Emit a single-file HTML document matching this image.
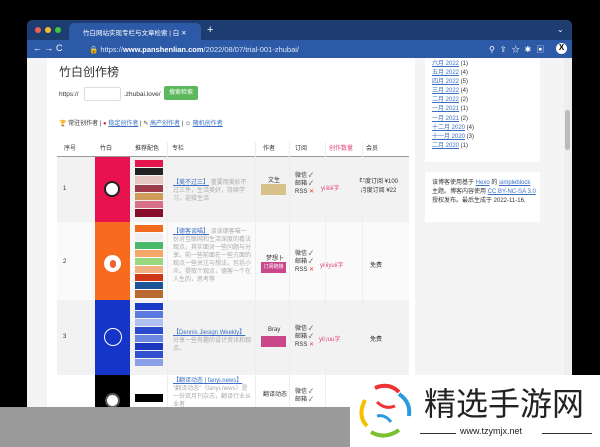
<!DOCTYPE html>
<html><head><meta charset="utf-8"><style>
*{margin:0;padding:0;box-sizing:border-box}
body{width:600px;height:447px;background:#000;position:relative;overflow:hidden;font-family:"Liberation Sans","Noto Sans CJK SC",sans-serif;font-size:6px;color:#333}
.a{position:absolute;white-space:nowrap}
.w{white-space:normal}
.lnk{color:#3a6fc4;text-decoration:underline}
</style></head><body>
<div class="a" style="left:27px;top:20px;width:545px;height:390px;background:#f4f4f4;border-radius:6px 6px 0 0;overflow:hidden">
 <div class="a" style="left:0;top:0;width:545px;height:20px;background:#1d3d70"></div>
 <div class="a" style="left:8px;top:7px;width:6px;height:6px;border-radius:3px;background:#ee5f57"></div>
 <div class="a" style="left:18px;top:7px;width:6px;height:6px;border-radius:3px;background:#f5bd2f"></div>
 <div class="a" style="left:28px;top:7px;width:6px;height:6px;border-radius:3px;background:#3fc73f"></div>
 <div class="a" style="left:42px;top:3px;width:132px;height:17px;background:#2c5aa6;border-radius:5px 5px 0 0"></div>
 <div class="a" style="left:56px;top:7px;color:#fff;font-size:6.5px">竹白网站实现专栏与文章检索 | 白 ✕</div>
 <div class="a" style="left:180px;top:4px;color:#fff;font-size:11px">+</div>
 <div class="a" style="left:530px;top:5px;color:#fff;font-size:8px">⌄</div>
 <div class="a" style="left:0;top:20px;width:545px;height:18px;background:#2c5aa6"></div>
 <div class="a" style="left:6px;top:23px;color:#fff;font-size:9px">← → C</div>
 <div class="a" style="left:62px;top:25px;color:#dde6f5;font-size:7.5px">🔒 https://<b style="color:#fff">www.panshenlian.com</b>/2022/08/07/trial-001-zhubai/</div>
 <div class="a" style="left:462px;top:24px;color:#fff;font-size:8px;letter-spacing:5px">⚲⇪☆✱▣</div>
 <div class="a" style="left:529px;top:23px;width:11px;height:11px;border-radius:6px;background:#fff;color:#000;font-size:8px;text-align:center;font-weight:bold">X</div>
 <!-- main card -->
 <div class="a" style="left:20px;top:38px;width:368px;height:360px;background:#fff"></div>
 <div class="a" style="left:32px;top:43px;font-size:12px;color:#333">竹白创作榜</div>
 <div class="a" style="left:32px;top:71px;font-size:6.5px">https://</div>
 <div class="a" style="left:57px;top:67px;width:37px;height:14px;border:1px solid #ddd;border-radius:2px"></div>
 <div class="a" style="left:97px;top:71px;font-size:6.5px">.zhubai.love/</div>
 <div class="a" style="left:137px;top:66px;width:34px;height:14px;background:#5cb85c;border-radius:2px;color:#fff;font-size:6px;text-align:center;line-height:14px">搜索检索</div>
 <div class="a" style="left:32px;top:98px;font-size:6px">🏆 常驻创作者 | <span style="color:#c33">●</span> <span class="lnk">稳定创作者</span> | ✎ <span class="lnk">高产创作者</span> | ☺ <span class="lnk">随机创作者</span></div>
 <!-- table header -->
 <div class="a" style="left:30px;top:122px;width:352px;height:15px;border-bottom:1px solid #999;font-size:6px;line-height:15px">
  <span class="a" style="left:7px">序号</span><span class="a" style="left:43px">竹白</span><span class="a" style="left:78px">推荐配色</span><span class="a" style="left:115px">专栏</span><span class="a" style="left:206px">作者</span><span class="a" style="left:238px">订阅</span><span class="a" style="left:272px;color:#e0457b">创作数量</span><span class="a" style="left:309px">会员</span>
 </div>
 <!-- row1 -->
 <div class="a" style="left:30px;top:137px;width:352px;height:65px;background:#f2f2f2"></div>
 <div class="a" style="left:68px;top:137px;width:35px;height:65px;background:#e8124f"></div>
 <div class="a" style="left:77px;top:161px;width:16px;height:16px;border-radius:8px;background:#fff;border:2px solid #222"></div>
 <div class="a" style="left:108px;top:140px;width:28px">
  <div style="height:7px;background:#e5154d;margin-bottom:1px"></div><div style="height:7px;background:#222;margin-bottom:1px"></div><div style="height:8px;background:#e7c7c3;margin-bottom:1px"></div><div style="height:7px;background:#9a3a4a;margin-bottom:1px"></div><div style="height:7px;background:#d09a5a;margin-bottom:1px"></div><div style="height:7px;background:#d8708a;margin-bottom:1px"></div><div style="height:8px;background:#8a0c2c"></div></div>
 <div class="a" style="left:36px;top:166px">1</div>
 <div class="a w" style="left:146px;top:159px;width:78px;line-height:8px"><span class="lnk">【美不过三】</span> <span style="color:#aaa">重要而美妙不过三件，生活美好，持续学习，迎接生活</span></div>
 <div class="a" style="left:241px;top:155px">文生</div>
 <div class="a" style="left:234px;top:164px;width:25px;height:11px;background:#d8c08a"></div>
 <div class="a" style="left:268px;top:152px;line-height:8px">微信 ✓<br>邮箱 ✓<br>RSS <span style="color:#e33">✕</span></div>
 <div class="a" style="left:294px;top:163px;color:#e0457b">yiiiiiii字</div>
 <div class="a" style="left:332px;top:158px;line-height:9px;text-align:center">年度订阅 ¥100<br>月度订阅 ¥22</div>
 <!-- row2 -->
 <div class="a" style="left:30px;top:202px;width:352px;height:78px;background:#fafafa"></div>
 <div class="a" style="left:68px;top:202px;width:35px;height:78px;background:#f86a1e"></div>
 <div class="a" style="left:77px;top:235px;width:17px;height:17px;border-radius:9px;background:#fff"></div>
 <div class="a" style="left:83px;top:240px;width:6px;height:8px;border-radius:3px;background:#f06030"></div>
 <div class="a" style="left:108px;top:205px;width:28px">
  <div style="height:7px;background:#f26a1e;margin-bottom:1px"></div><div style="height:8px;background:#eee;margin-bottom:1px"></div><div style="height:7px;background:#4aba6a;margin-bottom:1px"></div><div style="height:7px;background:#f4a76a;margin-bottom:1px"></div><div style="height:7px;background:#9ad880;margin-bottom:1px"></div><div style="height:7px;background:#f0b080;margin-bottom:1px"></div><div style="height:7px;background:#cc3818;margin-bottom:1px"></div><div style="height:7px;background:#1c5496;margin-bottom:1px"></div><div style="height:8px;background:#b86a30"></div></div>
 <div class="a" style="left:36px;top:239px">2</div>
 <div class="a w" style="left:146px;top:208px;width:78px;line-height:8px;color:#aaa"><span class="lnk">【德客谈喵】</span> 谈谈德客喵一份对互联网和生活深度的看法观点，其实面对一些问题与分享。前一些前面在一些方面的观点一些关注与想法，包括小众，提取个观点，德客一个在人生的，思考等</div>
 <div class="a" style="left:239px;top:233px">梦想卜</div>
 <div class="a" style="left:234px;top:242px;width:25px;height:11px;background:#c8488a;color:#fff;font-size:5px;text-align:center;line-height:11px">订阅链接</div>
 <div class="a" style="left:268px;top:230px;line-height:8px">微信 ✓<br>邮箱 ✓<br>RSS <span style="color:#e33">✕</span></div>
 <div class="a" style="left:293px;top:240px;color:#e0457b">yiiiiyuii字</div>
 <div class="a" style="left:343px;top:240px">免费</div>
 <!-- row3 -->
 <div class="a" style="left:30px;top:280px;width:352px;height:75px;background:#f2f2f2"></div>
 <div class="a" style="left:68px;top:280px;width:35px;height:75px;background:#1435c8"></div>
 <div class="a" style="left:77px;top:308px;width:18px;height:18px;border-radius:9px;border:1px solid #fff"></div>
 <div class="a" style="left:108px;top:283px;width:28px">
  <div style="height:7px;background:#1a3ac8;margin-bottom:1px"></div><div style="height:7px;background:#5a7ae0;margin-bottom:1px"></div><div style="height:7px;background:#b0c0f0;margin-bottom:1px"></div><div style="height:7px;background:#2a4ad0;margin-bottom:1px"></div><div style="height:7px;background:#6a88e0;margin-bottom:1px"></div><div style="height:7px;background:#1a38c0;margin-bottom:1px"></div><div style="height:7px;background:#3050d0;margin-bottom:1px"></div><div style="height:7px;background:#8aa0e8"></div></div>
 <div class="a" style="left:36px;top:314px">3</div>
 <div class="a w" style="left:146px;top:309px;width:78px;line-height:8px;color:#aaa"><span class="lnk">【Dennis Jiesign Weekly】</span> 分享一些有趣的设计资讯和观点。</div>
 <div class="a" style="left:241px;top:307px">Bray</div>
 <div class="a" style="left:234px;top:316px;width:25px;height:11px;background:#c8488a"></div>
 <div class="a" style="left:268px;top:305px;line-height:8px">微信 ✓<br>邮箱 ✓<br>RSS <span style="color:#e33">✕</span></div>
 <div class="a" style="left:292px;top:314px;color:#e0457b">yiiyuu字</div>
 <div class="a" style="left:343px;top:314px">免费</div>
 <!-- row4 -->
 <div class="a" style="left:68px;top:355px;width:35px;height:40px;background:#000"></div>
 <div class="a" style="left:78px;top:373px;width:15px;height:15px;border-radius:8px;background:#fff;border:2px solid #555"></div>
 <div class="a" style="left:108px;top:374px;width:28px;height:8px;background:#000"></div>
 <div class="a w" style="left:146px;top:357px;width:78px;line-height:8px;color:#aaa"><span class="lnk">【翻译动态 | fanyi.news】</span> "翻译动态"（fanyi.news）是一份双月刊杂志，翻译行业从业者</div>
 <div class="a" style="left:236px;top:369px">翻译动态</div>
 <div class="a" style="left:268px;top:368px;line-height:8px">微信 ✓<br>邮箱 ✓</div>
 <!-- column lines -->
 <div class="a" style="left:140px;top:122px;width:1px;height:270px;background:#eee"></div>
 <div class="a" style="left:228px;top:122px;width:1px;height:270px;background:#eee"></div>
 <div class="a" style="left:262px;top:122px;width:1px;height:270px;background:#eee"></div>
 <div class="a" style="left:298px;top:122px;width:1px;height:270px;background:#eee"></div>
 <div class="a" style="left:335px;top:122px;width:1px;height:270px;background:#eee"></div>
 <!-- sidebar -->
 <div class="a" style="left:398px;top:38px;width:115px;height:104px;background:#fff"></div>
 <div class="a" style="left:405px;top:40px;line-height:9.1px;font-size:6px"><span class="lnk">六月 2022</span> (1)<br><span class="lnk">五月 2022</span> (4)<br><span class="lnk">四月 2022</span> (5)<br><span class="lnk">三月 2022</span> (4)<br><span class="lnk">二月 2022</span> (2)<br><span class="lnk">一月 2021</span> (1)<br><span class="lnk">一月 2021</span> (2)<br><span class="lnk">十二月 2020</span> (4)<br><span class="lnk">十一月 2020</span> (3)<br><span class="lnk">二月 2020</span> (1)</div>
 <div class="a" style="left:398px;top:152px;width:115px;height:50px;background:#fff"></div>
 <div class="a w" style="left:405px;top:159px;width:104px;line-height:9px;font-size:6px">该博客使用基于 <span class="lnk">Hexo</span> 的 <span class="lnk">simpleblock</span> 主题。博客内容使用 <span class="lnk">CC BY-NC-SA 3.0</span> 授权发布。最后生成于 2022-11-16.</div>
 <div class="a" style="left:537px;top:38px;width:8px;height:360px;background:#eee"></div>
 <div class="a" style="left:538px;top:90px;width:5px;height:40px;background:#bbb;border-radius:3px"></div>
</div>
<div class="a" style="left:0;top:407px;width:600px;height:40px;background:#9a9a9a"></div>
<div class="a" style="left:350px;top:375px;width:250px;height:72px;background:#fff"></div>
<svg class="a" style="left:355px;top:380px" width="62" height="64" viewBox="0 0 62 64">
 <path d="M20 8 Q34 2 44 12" stroke="#e33" stroke-width="4" fill="none"/>
 <path d="M44 14 Q56 22 54 36" stroke="#2a9ae0" stroke-width="4" fill="none"/>
 <path d="M10 20 Q2 36 12 46" stroke="#f5c000" stroke-width="4" fill="none"/>
 <path d="M16 52 Q30 60 44 50" stroke="#7ac030" stroke-width="4" fill="none"/>
 <path d="M22 22 Q30 30 40 26" stroke="#e33" stroke-width="3" fill="none"/>
 <path d="M22 36 Q30 34 36 42" stroke="#2a9ae0" stroke-width="3" fill="none"/>
</svg>
<div class="a" style="left:424px;top:383px;font-size:32px;line-height:38px;color:#222;font-family:'Noto Sans CJK SC',sans-serif">精选手游网</div>
<div class="a" style="left:420px;top:433px;width:36px;height:1px;background:#333"></div>
<div class="a" style="left:460px;top:426px;font-size:9px;color:#222">www.tzymjx.net</div>
<div class="a" style="left:542px;top:433px;width:50px;height:1px;background:#333"></div>
</body></html>
